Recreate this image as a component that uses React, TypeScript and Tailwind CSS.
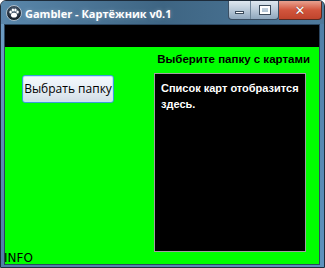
import React from 'react';

function PawIcon() {
  return (
    <svg width="16" height="16" viewBox="0 0 16 16">
      <defs>
        <radialGradient id="pawbg" cx="50%" cy="35%" r="60%">
          <stop offset="0%" stopColor="#5a6f86" />
          <stop offset="100%" stopColor="#111a24" />
        </radialGradient>
      </defs>
      <circle cx="8" cy="8" r="7.5" fill="url(#pawbg)" stroke="#c9d6e2" strokeWidth="0.8" />
      <ellipse cx="8" cy="10.2" rx="3" ry="2.4" fill="#fff" />
      <ellipse cx="4.6" cy="7" rx="1.2" ry="1.5" fill="#fff" />
      <ellipse cx="6.9" cy="5.1" rx="1.2" ry="1.5" fill="#fff" />
      <ellipse cx="9.4" cy="5.1" rx="1.2" ry="1.5" fill="#fff" />
      <ellipse cx="11.6" cy="7" rx="1.2" ry="1.5" fill="#fff" />
    </svg>
  );
}

function CaptionButtons() {
  return (
    <div className="flex items-start">
      <div className="flex h-[19px] rounded-b-[4px] border border-t-0 border-[#3b4f63] bg-gradient-to-b from-[#dfe8f0] via-[#b9c9d8] to-[#8fa7bd] overflow-hidden">
        <div className="w-[22px] flex items-center justify-center border-r border-[#6d8498]">
          <div className="w-[9px] h-[3px] mt-[5px] bg-white border border-[#3a4a5a]" />
        </div>
        <div className="w-[27px] flex items-center justify-center">
          <div className="w-[10px] h-[8px] border-2 border-white outline outline-1 outline-[#3a4a5a]" />
        </div>
      </div>
      <div className="w-[43px] h-[19px] rounded-br-[4px] border border-t-0 border-l-0 border-[#5a2a22] bg-gradient-to-b from-[#e8a190] via-[#d2553d] to-[#c0442c] flex items-center justify-center">
        <span className="text-white font-bold text-[13px] leading-none [font-family:'DejaVu_Sans',sans-serif] [text-shadow:0_0_1px_#4a1a10]">
          ✕
        </span>
      </div>
    </div>
  );
}

export default function App() {
  return (
    <div className="w-[325px] h-[268px] flex flex-col bg-gradient-to-br from-[#6f9fc6] via-[#4f7ea6] to-[#5d92bd] border border-[#1d2b3a] rounded-t-[6px] overflow-hidden">
      <div className="h-[25px] flex items-start justify-between pl-[5px] pr-[2px] bg-gradient-to-r from-[#5a87ab] via-[#3e6583] to-[#4f7a9c]">
        <div className="flex items-center gap-[3px] mt-[4px]">
          <PawIcon />
          <span className="text-white text-[11px] font-bold leading-none [font-family:'Open_Sans',sans-serif] [text-shadow:0_0_4px_rgba(255,255,255,0.35)]">
            Gambler - Картёжник v0.1
          </span>
        </div>
        <CaptionButtons />
      </div>
      <div className="flex-1 flex flex-col ml-[3px] mr-[4px] mb-[2px] border border-[#2a4660]">
        <div className="h-[22px] bg-black" />
        <div className="flex-1 flex flex-col bg-[#00ff00] [font-family:'Liberation_Sans',sans-serif]">
          <div className="flex-1 flex justify-between">
            <div className="pl-[17px] pt-[28px]">
              <button className="w-[92px] h-[28px] rounded-[3px] border border-[#3c9fd8] bg-gradient-to-b from-[#f4f9fc] via-[#e6eef5] to-[#d2dde6] text-[12px] text-black [font-family:'Open_Sans',sans-serif] shadow-[inset_0_0_0_1px_#c6e4f7]">
                Выбрать папку
              </button>
            </div>
            <div className="w-[153px] mr-[12px] flex flex-col items-end">
              <div className="pt-[5px] h-[26px] -mr-[3px] whitespace-nowrap text-right text-[11.5px] font-bold leading-[14px] text-black">
                Выберите папку с картами
              </div>
              <div className="w-[152px] h-[179px] self-start border border-[#a0a0a0] bg-black pl-[6px] pr-[4px] pt-[6px] text-white text-[11px] font-bold leading-[16px]">
                Список карт отобразится здесь.
              </div>
            </div>
          </div>
          <div className="h-[12px] -ml-[1px] text-[12px] leading-[12px] text-black [font-family:'DejaVu_Sans',sans-serif]">
            INFO
          </div>
        </div>
      </div>
    </div>
  );
}
